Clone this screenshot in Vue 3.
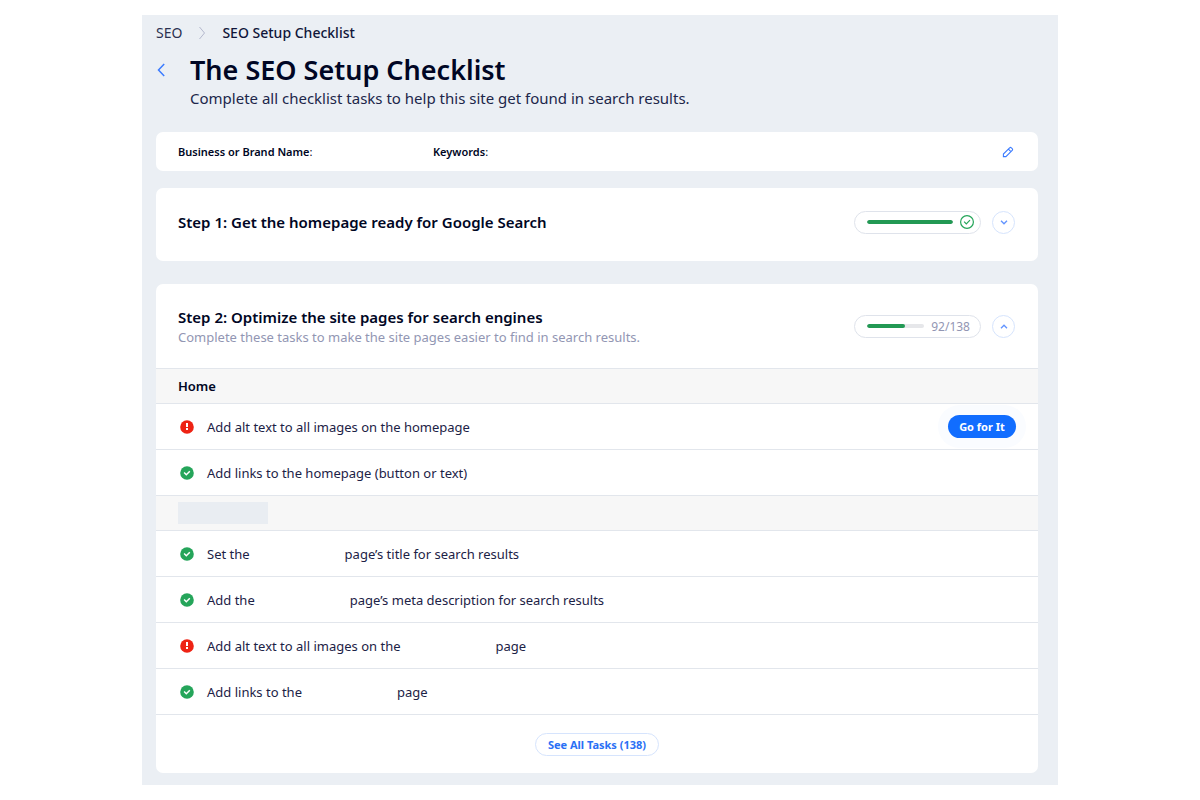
<script setup>
const groups = [
  {
    name: 'Home',
    tasks: [
      { done: false, text: ['Add alt text to all images on the homepage'], action: true },
      { done: true, text: ['Add links to the homepage (button or text)'] },
    ],
  },
  {
    name: '',
    tasks: [
      { done: true, text: ['Set the', 'page’s title for search results'] },
      { done: true, text: ['Add the', 'page’s meta description for search results'] },
      { done: false, text: ['Add alt text to all images on the', 'page'] },
      { done: true, text: ['Add links to the', 'page'] },
    ],
  },
]
const total = 138
const completed = 92
</script>

<template>
  <main class="page">
    <nav class="crumbs" aria-label="Breadcrumb">
      <a href="#" class="crumb">SEO</a>
      <svg class="crumb-sep" viewBox="0 0 8 14" aria-hidden="true"><path d="M1.5 1l5 6-5 6" /></svg>
      <span class="crumb current">SEO Setup Checklist</span>
    </nav>

    <header class="head">
      <button class="back" type="button" aria-label="Back">
        <svg viewBox="0 0 8 14" aria-hidden="true"><path d="M7.2 1L1.5 7l5.7 6" /></svg>
      </button>
      <div>
        <h1>The SEO Setup Checklist</h1>
        <p class="lead">Complete all checklist tasks to help this site get found in search results.</p>
      </div>
    </header>

    <section class="card info">
      <div class="field"><b>Business or Brand Name</b>:</div>
      <div class="field"><b>Keywords</b>:</div>
      <button class="edit" type="button" aria-label="Edit">
        <svg viewBox="0 0 12 12" aria-hidden="true">
          <path d="M1.4 10.6V8.1L7.6 1.8a1.2 1.2 0 0 1 1.8 0l.8.8a1.2 1.2 0 0 1 0 1.8L3.9 10.6zM6.4 3.1l2.5 2.5" />
        </svg>
      </button>
    </section>

    <section class="card step first">
      <h2>Step 1: Get the homepage ready for Google Search</h2>
      <div class="status">
        <div class="pill">
          <span class="track"><span class="bar" style="width: 100%"></span></span>
          <svg class="ring" viewBox="0 0 14 14" aria-hidden="true">
            <circle cx="7" cy="7" r="6.4" /><path d="M4.1 6.6l2.2 2.2 3.7-3.7" />
          </svg>
        </div>
        <button class="toggle" type="button" aria-label="Expand step 1">
          <svg viewBox="0 0 8 5" aria-hidden="true"><path d="M1 .8L4 3.8l3-3" /></svg>
        </button>
      </div>
    </section>

    <section class="card">
      <div class="step second">
        <div>
          <h2>Step 2: Optimize the site pages for search engines</h2>
          <p class="sub">Complete these tasks to make the site pages easier to find in search results.</p>
        </div>
        <div class="status">
          <div class="pill">
            <span class="track"><span class="bar" :style="{ width: (completed / total) * 100 + '%' }"></span></span>
            <span class="count">{{ completed }}/{{ total }}</span>
          </div>
          <button class="toggle" type="button" aria-label="Collapse step 2">
            <svg viewBox="0 0 8 5" aria-hidden="true"><path d="M1 4.2L4 1.2l3 3" /></svg>
          </button>
        </div>
      </div>

      <template v-for="(group, g) in groups" :key="g">
        <h3 class="group">
          <template v-if="group.name">{{ group.name }}</template>
          <span v-else class="blank"></span>
        </h3>
        <ul class="tasks">
          <li v-for="(task, t) in group.tasks" :key="t" class="task">
            <svg v-if="task.done" class="mark" viewBox="0 0 14 14" aria-hidden="true">
              <circle cx="7" cy="7" r="6.8" fill="#25a55a" />
              <path d="M4.1 6.5l2.2 2.2 3.5-3.5" fill="none" stroke="#fff" stroke-width="1.5" />
            </svg>
            <svg v-else class="mark" viewBox="0 0 14 14" aria-hidden="true">
              <circle cx="7" cy="7" r="6.8" fill="#ee2314" />
              <path d="M7 3v4M7 8v2" fill="none" stroke="#fff" stroke-width="2" />
            </svg>
            <span class="text"><span v-for="part in task.text" :key="part">{{ part }}</span></span>
            <span v-if="task.action" class="halo"><button class="go" type="button">Go for It</button></span>
          </li>
        </ul>
      </template>

      <div class="foot">
        <button class="all" type="button">See All Tasks ({{ total }})</button>
      </div>
    </section>
  </main>
</template>

<style>
body {
  background: #fff;
}
</style>

<style scoped>
.page {
  margin: 15px 142px;
  padding: 8px 20px 12px 14px;
  background: #ebeff4;
  color: #000624;
  font-family: "Noto Sans", "Liberation Sans", sans-serif;
  font-size: 13px;
}
h1, h2, h3, p, ul {
  margin: 0;
  padding: 0;
}
button {
  font-family: inherit;
  padding: 0;
  border: 0;
  background: none;
  cursor: pointer;
}
svg {
  display: block;
  flex: none;
}
.crumbs {
  display: flex;
  align-items: center;
  height: 20px;
  font-size: 14px;
  line-height: 18px;
}
.crumb {
  color: #2b3150;
  text-decoration: none;
}
.crumb.current {
  color: #10163a;
  font-weight: 500;
}
.crumb-sep {
  width: 8px;
  height: 14px;
  margin: 0 16px;
  fill: none;
  stroke: #b4b8cd;
}
.head {
  display: flex;
  align-items: flex-start;
  padding-top: 9px;
}
.back {
  width: 12px;
  height: 36px;
  margin-right: 22px;
}
.back svg {
  width: 8px;
  height: 14px;
  margin-left: 1px;
  fill: none;
  stroke: #3b7bff;
  stroke-width: 1.5;
}
h1 {
  font-size: 27px;
  line-height: 36px;
  font-weight: 600;
}
.lead {
  font-size: 15px;
  line-height: 20px;
  color: #20264a;
}
.card {
  background: #fff;
  border-radius: 7px;
}
.info {
  display: flex;
  align-items: center;
  height: 39px;
  margin-top: 24px;
  padding: 0 24px 0 22px;
  font-size: 11px;
}
.field {
  flex: 0 0 255px;
}
.field b {
  font-weight: 600;
}
.edit {
  margin-left: auto;
}
.edit svg {
  width: 12px;
  height: 12px;
  fill: none;
  stroke: #3b7bff;
  stroke-width: 1.1;
}
.step {
  display: flex;
  align-items: center;
  justify-content: space-between;
  padding: 0 23px 0 22px;
}
.first {
  height: 73px;
  margin: 17px 0 23px;
  padding-bottom: 5px;
  box-sizing: border-box;
}
.second {
  height: 84px;
}
h2 {
  font-size: 15px;
  line-height: 22px;
  font-weight: 600;
}
.sub {
  line-height: 18px;
  color: #9296b3;
}
.status {
  display: flex;
  gap: 11px;
}
.pill {
  display: flex;
  align-items: center;
  gap: 7px;
  width: 127px;
  height: 23px;
  padding: 0 6px 0 12px;
  box-sizing: border-box;
  border: 1px solid #dfe3eb;
  border-radius: 12px;
}
.track {
  flex: 1;
  height: 4px;
  border-radius: 2px;
  background: #e6e7ea;
  overflow: hidden;
}
.bar {
  display: block;
  height: 100%;
  border-radius: 2px;
  background: #229954;
}
.ring {
  width: 14px;
  height: 14px;
  fill: none;
  stroke: #25a55a;
  stroke-width: 1.2;
}
.count {
  padding-right: 4px;
  font-size: 12px;
  color: #9296b3;
}
.toggle {
  display: grid;
  place-items: center;
  width: 23px;
  height: 23px;
  border: 1px solid #d6e4fd;
  border-radius: 50%;
}
.toggle svg {
  width: 8px;
  height: 5px;
  fill: none;
  stroke: #6193ff;
  stroke-width: 1.3;
}
.group {
  display: flex;
  align-items: center;
  height: 35px;
  padding: 0 22px;
  border-top: 1px solid #e2e6ec;
  box-sizing: border-box;
  background: #f7f7f7;
  font-size: 13px;
  font-weight: 600;
}
.blank {
  width: 90px;
  height: 22px;
  background: #e9edf2;
}
.tasks {
  list-style: none;
}
.task {
  display: flex;
  align-items: center;
  height: 46px;
  padding: 0 12px 0 24px;
  border-top: 1px solid #e2e6ec;
  box-sizing: border-box;
  color: #1c2246;
}
.mark {
  width: 14px;
  height: 14px;
  margin-right: 13px;
}
.text {
  display: flex;
  gap: 95px;
}
.halo {
  display: flex;
  margin-left: auto;
  padding: 10px;
  border-radius: 22px;
  background: #fafcff;
}
.go {
  width: 68px;
  height: 23px;
  border-radius: 12px;
  background: #116dff;
  color: #fff;
  font-size: 11px;
  font-weight: 700;
}
.foot {
  display: flex;
  justify-content: center;
  align-items: center;
  height: 59px;
  border-top: 1px solid #e2e6ec;
  box-sizing: border-box;
}
.all {
  width: 124px;
  height: 23px;
  border: 1px solid #d6e4fd;
  border-radius: 12px;
  color: #2a70f5;
  font-size: 11px;
  font-weight: 700;
}
</style>
